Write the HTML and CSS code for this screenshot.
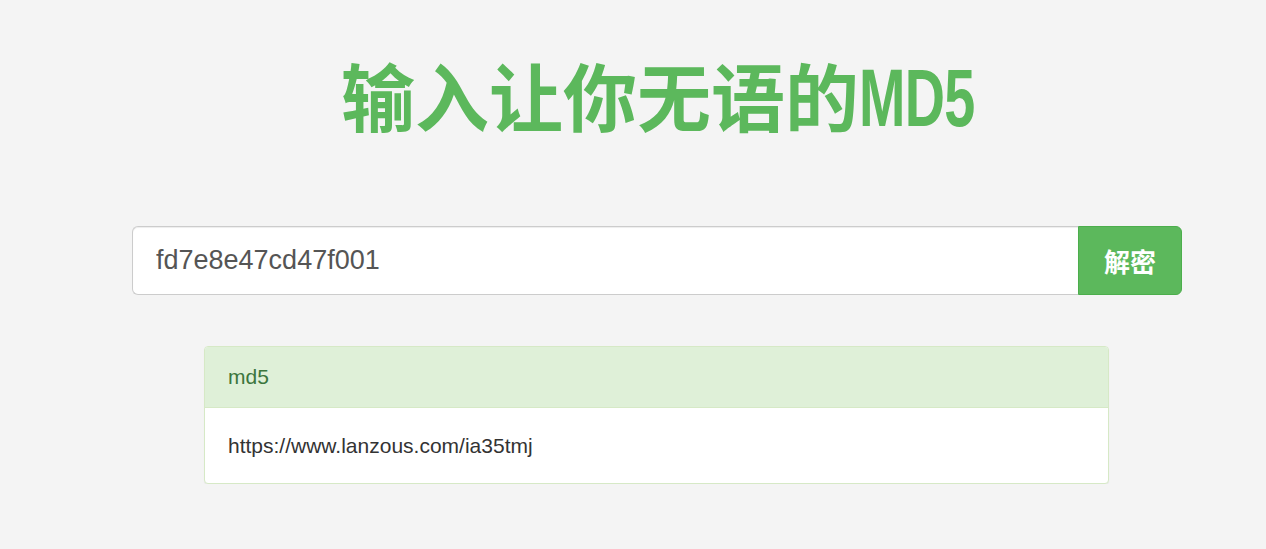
FILE: index.html
```html
<!DOCTYPE html>
<html lang="zh-CN">
<head>
  <meta charset="UTF-8" />
  <title>输入让你无语的MD5</title>
  <link rel="stylesheet" href="styles.css">
</head>
<body>
  <div class="container">
    <h1 class="title">输入让你无语的<span class="latin">MD5</span></h1>

    <form class="input-group" onsubmit="return false">
      <input class="md5-input" type="text" value="fd7e8e47cd47f001">
      <button class="btn-decrypt" type="submit">解密</button>
    </form>

    <div class="panel">
      <div class="panel-heading">md5</div>
      <div class="panel-body">https://www.lanzous.com/ia35tmj</div>
    </div>
  </div>
</body>
</html>
```

FILE: styles.css
```css
* {
  box-sizing: border-box;
}

body {
  margin: 0;
  padding-left: 48px;
  background: #f4f4f4;
  font-family: "Liberation Sans", Arial, "Noto Sans CJK SC", sans-serif;
  color: #333;
}

.container {
  width: 1050px;
  margin: 0 auto;
}

.title {
  margin: 44px 0 0;
  height: 132px;
  text-align: center;
  color: #5cb85c;
  font-family: "Noto Sans CJK SC", sans-serif;
  font-weight: 700;
  font-size: 74px;
  line-height: 100px;
}

.title .latin {
  display: inline-block;
  font-family: "Liberation Sans", sans-serif;
  font-weight: bold;
  font-size: 82px;
  letter-spacing: -1px;
  transform: scaleX(0.68);
  transform-origin: left center;
  margin-right: -56px;
}

.input-group {
  display: flex;
  margin: 50px 0 0;
  height: 69px;
}

.md5-input {
  flex: 1;
  min-width: 0;
  border: 1px solid #ccc;
  border-right: none;
  border-radius: 6px 0 0 6px;
  padding: 0 23px;
  font-family: "Liberation Sans", Arial, sans-serif;
  font-size: 27px;
  color: #555;
  background: #fff;
  box-shadow: inset 0 1px 1px rgba(0, 0, 0, .075);
  outline: none;
}

.btn-decrypt {
  width: 104px;
  border: 1px solid #4cae4c;
  border-radius: 0 6px 6px 0;
  background: #5cb85c;
  color: #fff;
  font-family: "Noto Sans CJK SC", sans-serif;
  font-weight: bold;
  font-size: 26px;
  cursor: pointer;
}

.panel {
  width: 905px;
  margin: 51px auto 0 72px;
  background: #fff;
  border: 1px solid #d6e9c6;
  border-radius: 4px;
  box-shadow: 0 1px 1px rgba(0, 0, 0, .05);
  overflow: hidden;
}

.panel-heading {
  height: 61px;
  padding: 0 23px;
  display: flex;
  align-items: center;
  background: #dff0d8;
  border-bottom: 1px solid #d6e9c6;
  color: #3c763d;
  font-size: 21px;
}

.panel-body {
  height: 75px;
  padding: 0 23px;
  display: flex;
  align-items: center;
  font-size: 21px;
  color: #333;
}
```
